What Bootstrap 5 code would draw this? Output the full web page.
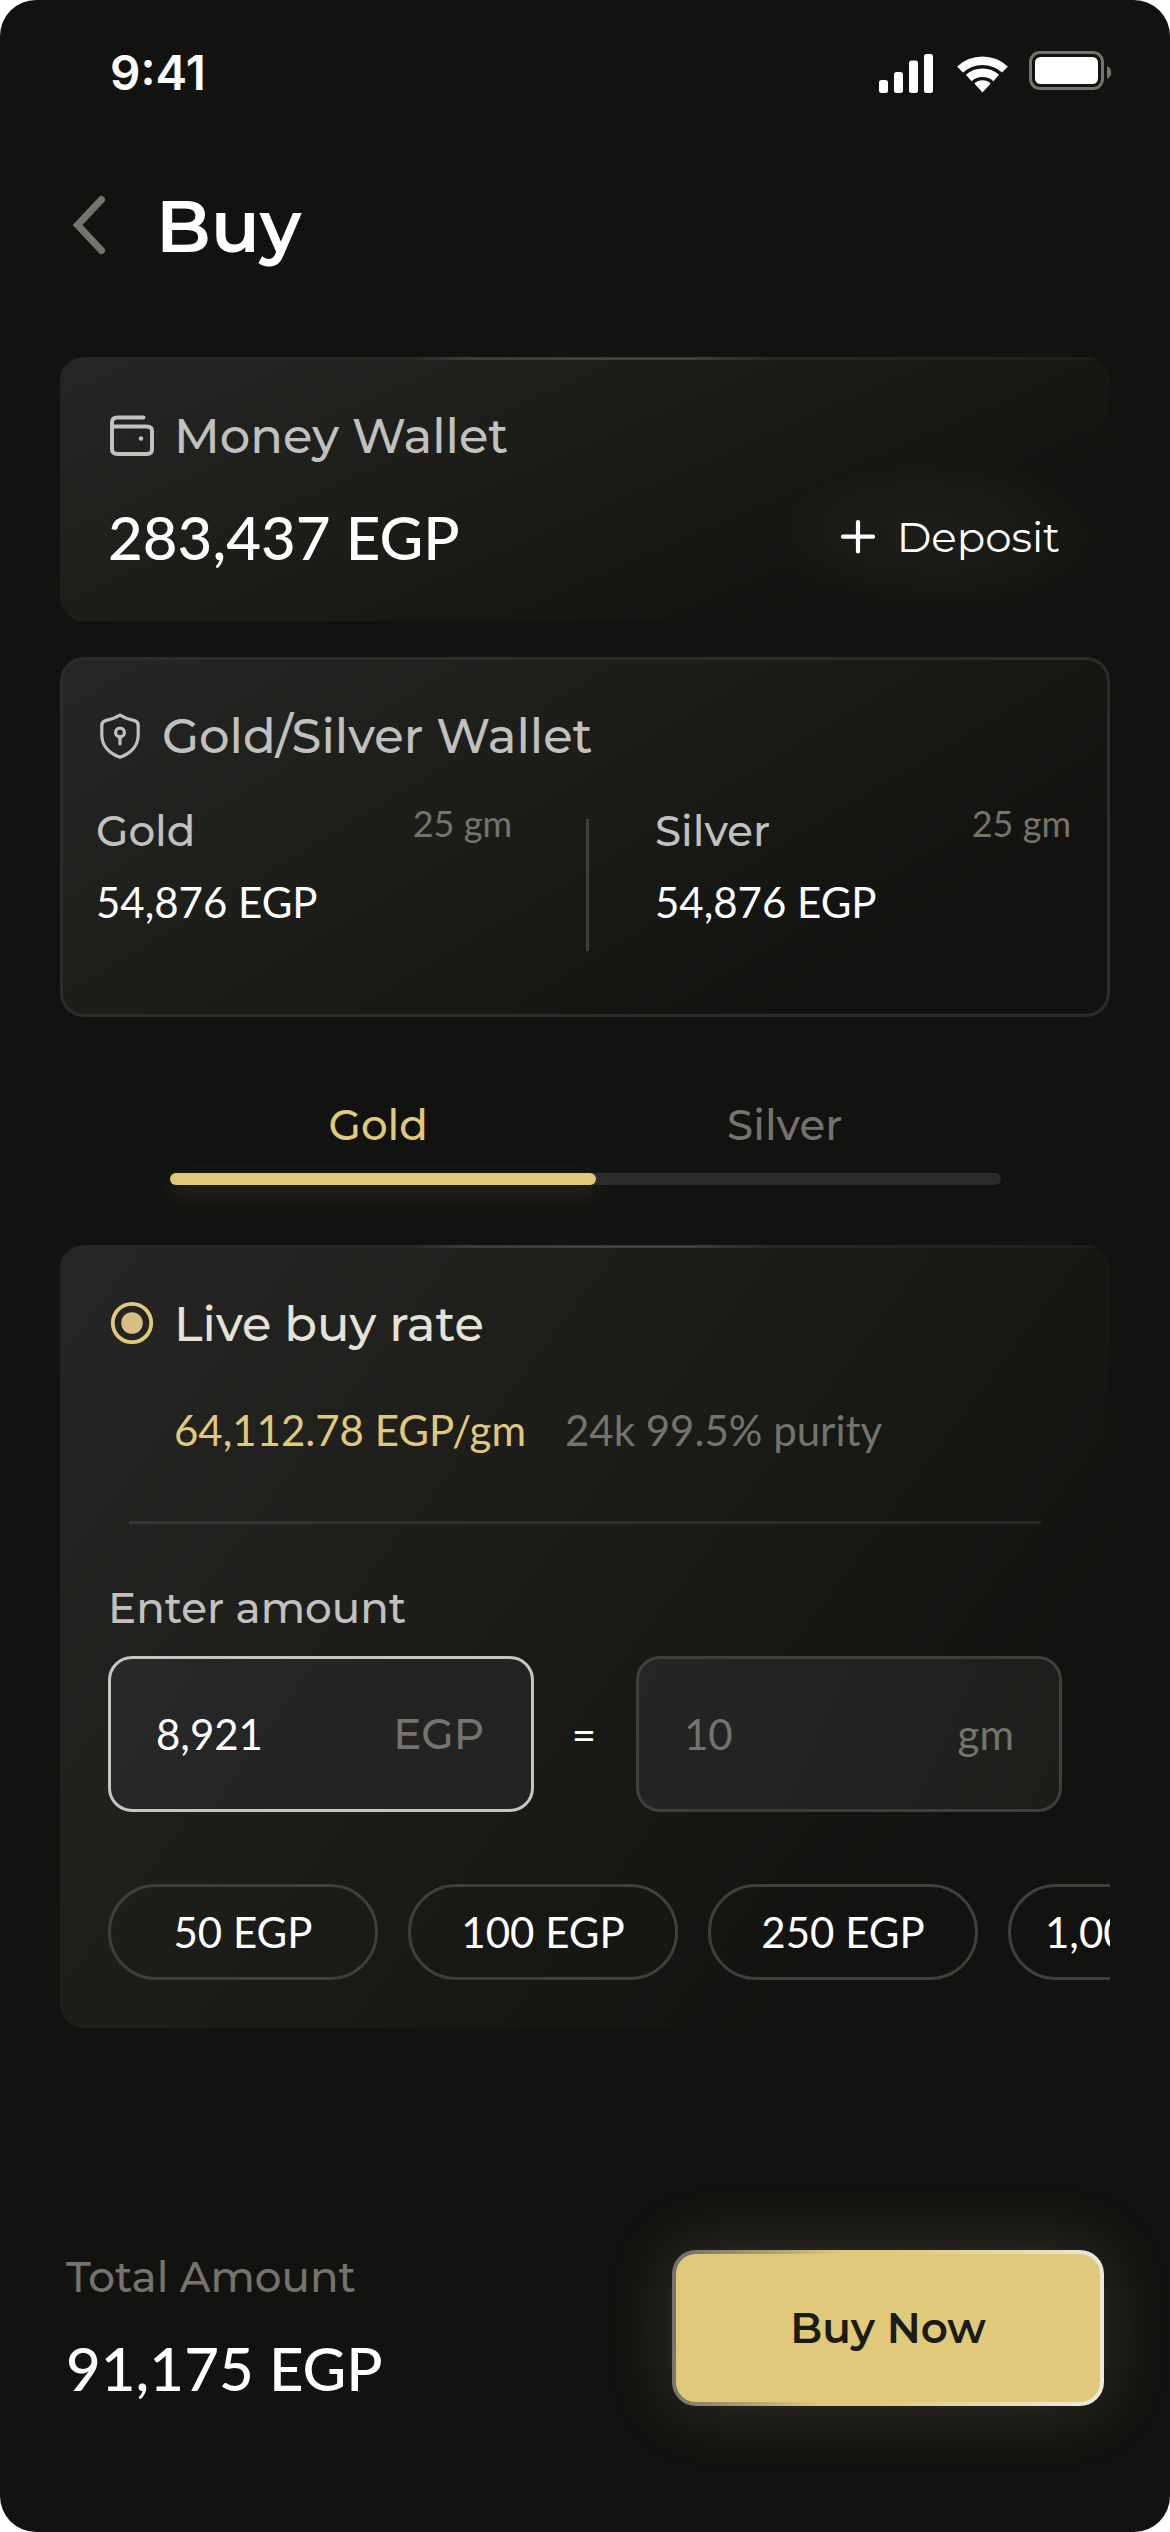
<!DOCTYPE html>
<html lang="en">
<head>
<meta charset="utf-8">
<meta name="viewport" content="width=device-width, initial-scale=1">
<title>Buy</title>
<link href="https://cdn.jsdelivr.net/npm/bootstrap@5.3.0/dist/css/bootstrap.min.css" rel="stylesheet">
<style>
:root{--ink:#121210;--gold:#e1c97b;--mute:#75736b;--soft:#c1c1c0;--line:#3f3f3b}
body{background:#fff;font-family:Montserrat,Inter,"Open Sans",sans-serif;font-weight:500;color:#fff}
.screen{width:1170px;height:2532px;background:var(--ink);border-radius:36px}
svg{display:block;flex:none}
.t-time{font:600 47.500px/60px Inter,sans-serif}
.t-title{font-size:72px;line-height:88px;font-weight:600;margin:0 0 0 48px}
.t-lg{font-size:48px;line-height:60px;font-weight:500;white-space:nowrap}
.t-md{font-size:42px;line-height:52px;white-space:nowrap}
.num{font-family:Lato,"Open Sans",sans-serif;white-space:nowrap}
.num-xl{font-size:60px;line-height:72px;font-weight:500}
.num-md{font-size:42px;line-height:52px;font-weight:400}
.num-sm{font-size:36px;line-height:44px;font-weight:400;margin-top:-4px}
.c-soft{color:var(--soft)}.c-mute{color:var(--mute)}.c-gold{color:var(--gold)}.c-ivory{color:#e5e3d8}
.gap-18{gap:18px}
.status{height:141px;padding:43px 59px 0 110px}
.topbar{height:216px;padding:41px 72px 0}
.panel{width:1050px;margin:0 auto;border-radius:24px;overflow:hidden;background:linear-gradient(var(--a),#262625,#1b1c17 45%,var(--ink) 81%)}
.panel-edge{background:linear-gradient(90deg,#282827,#252524 33%,#3d3d39 39%,#3f3f3b 60%,#262625 68%,#232322 88%,#1c1c1a) top/100% 3px no-repeat,linear-gradient(var(--a),#262625,#1b1c17 45%,var(--ink) 81%)}
.panel-cash{--a:156.500deg;height:264px;padding:49px 48px 0}
.panel-metal{--a:149deg;height:360px;margin-top:36px;border:3px solid #2c2c2b;padding:46px 36px 0 33px}
.panel-rate{--a:127deg;height:783px;margin-top:60px;padding:49px 0 0 48px}
.cash-row{margin-top:35px}
.deposit{padding:0 2px 0 0;border:0;color:#fff;gap:15px;background:radial-gradient(closest-side,rgba(120,122,96,.10),rgba(120,122,96,.06) 60%,transparent);padding:50px 50px 50px 60px;margin:-50px -48px -50px 0}
.holdings{margin-top:39px}
.holding{width:416px}
.holding .worth{margin-top:19px}
.divide{width:3px;height:132px;margin:14px 0 0 7px;background:var(--line)}
.tabs{width:831px;margin:82px auto 0 170px;padding:0 13px 0 5px}
.tabs a{color:var(--mute);text-decoration:none}
.tabs a.on{color:var(--gold)}
.track{width:831px;height:12px;margin:22px 0 0 170px;border-radius:6px;background:#2b2b2a}
.track div{width:426px;height:12px;border-radius:6px;background:var(--gold);box-shadow:0 8px 24px rgba(225,215,185,.16)}
.rate{margin:50px 0 0 66px;gap:39px}
.rule{width:912px;height:3px;margin:65px 0 58px 21px;background:linear-gradient(90deg,#373735,#2f2f2d 60%,#282827)}
.fields{margin-top:22px}
.field{width:426px;height:156px;border:3px solid var(--line);border-radius:24px;padding:0 45px;background:linear-gradient(115deg,#252525,#222221 50%,#1d1e1a)}
.field.on{border-color:#c4c4c0;padding-right:47px;background:linear-gradient(125deg,#292929,#232323 55%)}
.field input{width:180px;background:none;border:0;padding:0;outline:0;color:inherit}
.equals{width:102px;padding-right:2px}
.chips{gap:30px;margin-top:72px}
.chip{flex:none;width:270px;height:96px;border:3px solid var(--line);color:#fff;padding:0}
.chip-cut{padding-left:34px;text-align:left}
.footer{margin-top:222px;padding:0 66px}
.footer .due{margin:1px 0 29px}
.buy{width:432px;height:156px;border:4px solid transparent;border-radius:24px;color:#1b1c17;font-weight:600;background:linear-gradient(var(--gold),var(--gold)) padding-box,linear-gradient(98deg,#75736b 3%,var(--gold) 38%,var(--gold) 50%,#ece8dc 97%) border-box;box-shadow:0 0 66px rgba(225,215,180,.17)}
</style>
</head>
<body>
<main class="screen d-flex flex-column">
  <div class="status d-flex justify-content-between">
    <span class="t-time">9:41</span>
    <svg width="234" height="60" viewBox="877 43 234 60">
      <g fill="#fff">
        <rect x="879" y="80" width="9" height="13" rx="2.500"/><rect x="894" y="72" width="9" height="21" rx="2.500"/><rect x="909" y="60.500" width="9" height="32.500" rx="2.500"/><rect x="924" y="54" width="9" height="39" rx="2.500"/>
        <path d="M982.500 92.500l-7.500-8.200q-.8-1 .3-1.700a12 12 0 0 1 14.400 0q1.100.7.300 1.700z"/>
        <rect x="1035" y="57" width="63" height="27" rx="5.500"/>
      </g>
      <g fill="none" stroke="#fff" stroke-width="8.500">
        <path d="M960 69.500a33 33 0 0 1 45 0"/><path d="M968.800 78a20.500 20.500 0 0 1 27.400 0"/>
      </g>
      <rect x="1030.500" y="52.500" width="72" height="36" rx="9.500" fill="none" stroke="#75736b" stroke-width="3"/>
      <path d="M1107 66q4.300 2 4.300 6.500t-4.300 6.500z" fill="#75736b"/>
    </svg>
  </div>

  <header class="topbar d-flex">
    <svg width="36" height="88" viewBox="72 182 36 88" fill="none" stroke="#75736b" stroke-width="7" stroke-linecap="round"><path d="M101.500 199.500 77.500 225l24 25.500"/></svg>
    <h1 class="t-title">Buy</h1>
  </header>

  <section class="panel panel-edge panel-cash">
    <div class="d-flex align-items-center gap-18 c-soft">
      <svg width="48" height="48" viewBox="108 411 48 48" fill="none" stroke="#c1c1c0" stroke-width="4" stroke-linecap="round" stroke-linejoin="round"><path d="M143.500 416.500h-26q-5.500 0-5.500 5v26.500q0 5 5.500 5h29.500q5 0 5-5v-18q0-4.500-5-4.500h-34.500"/><circle cx="141" cy="437.500" r="2.300" fill="#c1c1c0" stroke="none"/></svg>
      <h2 class="t-lg m-0">Money Wallet</h2>
    </div>
    <div class="cash-row d-flex align-items-center justify-content-between">
      <span class="num num-xl">283,437 EGP</span>
      <button class="deposit t-md d-flex align-items-center">
        <svg width="48" height="48" viewBox="0 0 48 48" stroke="#fff" stroke-width="4.200" stroke-linecap="round"><path d="M24 9v29.500M9 23.700h30"/></svg>
        <span>Deposit</span>
      </button>
    </div>
  </section>

  <section class="panel panel-metal">
    <div class="d-flex align-items-center gap-18 c-soft">
      <svg width="48" height="48" viewBox="96 712 48 48" fill="none" stroke="#c1c1c0" stroke-width="3.200" stroke-linecap="round" stroke-linejoin="round"><path d="M120 715c-5 3.300-9.500 4.600-14.500 5.600q-3.700 1-3.700 4.900v9.500c0 11 8 18.500 18.200 22.300 10.200-3.800 18.200-11.300 18.200-22.300v-9.500q0-3.900-3.700-4.900c-5-1-9.500-2.300-14.500-5.600z"/><circle cx="120" cy="732.500" r="4.400"/><path d="M120 737v7"/></svg>
      <h2 class="t-lg m-0">Gold/Silver Wallet</h2>
    </div>
    <div class="holdings d-flex justify-content-between align-items-start">
      <div class="holding">
        <div class="d-flex justify-content-between"><span class="t-md c-soft">Gold</span><span class="num num-sm c-mute">25 gm</span></div>
        <div class="worth num num-md">54,876 EGP</div>
      </div>
      <div class="divide"></div>
      <div class="holding">
        <div class="d-flex justify-content-between"><span class="t-md c-soft">Silver</span><span class="num num-sm c-mute">25 gm</span></div>
        <div class="worth num num-md">54,876 EGP</div>
      </div>
    </div>
  </section>

  <nav class="tabs d-flex text-center">
    <a href="#" class="on t-md w-50">Gold</a>
    <a href="#" class="t-md w-50">Silver</a>
  </nav>
  <div class="track"><div></div></div>

  <section class="panel panel-edge panel-rate">
    <div class="d-flex align-items-center gap-18">
      <svg width="48" height="48" viewBox="0 0 48 48"><circle cx="24" cy="23" r="19.200" fill="none" stroke="#e1c97b" stroke-width="3.800"/><circle cx="24" cy="23" r="10.800" fill="#d5c083"/></svg>
      <h2 class="t-lg m-0 c-ivory">Live buy rate</h2>
    </div>
    <div class="rate d-flex num num-md">
      <span class="c-gold">64,112.78 EGP/gm</span><span class="c-mute">24k 99.5% purity</span>
    </div>
    <div class="rule"></div>
    <div class="t-md c-soft">Enter amount</div>
    <div class="fields d-flex align-items-center">
      <label class="field on d-flex align-items-center justify-content-between"><input class="num num-md" value="8,921"><span class="t-md c-mute">EGP</span></label>
      <span class="equals num num-md text-center">=</span>
      <label class="field d-flex align-items-center justify-content-between c-mute"><input class="num num-md" value="10"><span class="num num-md">gm</span></label>
    </div>
    <div class="chips d-flex">
      <button class="chip btn rounded-pill num num-md">50 EGP</button>
      <button class="chip btn rounded-pill num num-md">100 EGP</button>
      <button class="chip btn rounded-pill num num-md">250 EGP</button>
      <button class="chip chip-cut btn rounded-pill num num-md">1,000 EGP</button>
    </div>
  </section>

  <footer class="footer d-flex justify-content-between">
    <div>
      <div class="due t-md c-mute">Total Amount</div>
      <div class="num num-xl">91,175 EGP</div>
    </div>
    <button class="buy t-md">Buy Now</button>
  </footer>
</main>
<script src="https://cdn.jsdelivr.net/npm/bootstrap@5.3.0/dist/js/bootstrap.bundle.min.js"></script>
</body>
</html>
